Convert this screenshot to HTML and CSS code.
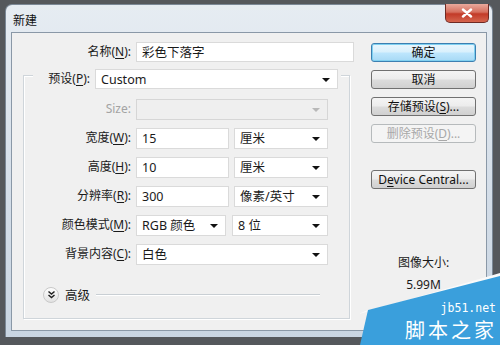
FILE: index.html
```html
<!DOCTYPE html>
<html lang="zh-CN">
<head>
    <meta charset="UTF-8">
    <title>新建</title>
    <link rel="stylesheet" href="styles.css">
</head>
<body>
    <div class="window">
        <div class="titlebar">
            <span class="title">新建</span>
            <button class="close" type="button">
                <svg width="14" height="10" viewBox="0 0 14 10"><path d="M3 1.5 L11 8.5 M11 1.5 L3 8.5" stroke="#fff" stroke-width="2.4" stroke-linecap="round"/></svg>
            </button>
        </div>
        <div class="content">
            <div class="form-col">
                <div class="name-row">
                    <label class="label name-label">名称(<u>N</u>):</label>
                    <div class="field name-field">彩色下落字</div>
                </div>

                <div class="group">
                    <div class="group-head">
                        <label class="label">预设(<u>P</u>):</label>
                        <div class="field select preset">Custom</div>
                    </div>

                    <div class="row first">
                        <label class="label muted">Size:</label>
                        <div class="field select disabled w-full"></div>
                    </div>
                    <div class="row">
                        <label class="label">宽度(<u>W</u>):</label>
                        <div class="field w-num">15</div>
                        <div class="field select w-unit">厘米</div>
                    </div>
                    <div class="row">
                        <label class="label">高度(<u>H</u>):</label>
                        <div class="field w-num">10</div>
                        <div class="field select w-unit">厘米</div>
                    </div>
                    <div class="row">
                        <label class="label">分辨率(<u>R</u>):</label>
                        <div class="field w-num">300</div>
                        <div class="field select w-unit">像素/英寸</div>
                    </div>
                    <div class="row">
                        <label class="label">颜色模式(<u>M</u>):</label>
                        <div class="field select w-mode">RGB 颜色</div>
                        <div class="field select w-bits">8 位</div>
                    </div>
                    <div class="row">
                        <label class="label">背景内容(<u>C</u>):</label>
                        <div class="field select w-full">白色</div>
                    </div>

                    <div class="advanced">
                        <span class="expander">
                            <svg width="9" height="9" viewBox="0 0 9 9"><path d="M1.5 1.5 L4.5 4 L7.5 1.5 M1.5 5 L4.5 7.5 L7.5 5" fill="none" stroke="#222" stroke-width="1.5"/></svg>
                        </span>
                        <span class="adv-text">高级</span>
                        <span class="adv-line"></span>
                    </div>
                </div>
            </div>

            <div class="side-col">
                <button class="btn default" type="button">确定</button>
                <button class="btn" type="button">取消</button>
                <button class="btn" type="button">存储预设(<u>S</u>)...</button>
                <button class="btn" type="button" disabled>删除预设(<u>D</u>)...</button>
                <button class="btn device" type="button">D<u>e</u>vice Central...</button>
                <div class="size-title">图像大小:</div>
                <div class="size-value">5.99M</div>
            </div>
        </div>
    </div>

    <!-- watermark in the corner -->
    <div class="watermark">
        <svg width="140" height="72" viewBox="0 0 140 72">
            <path d="M-4 42 L140 0 L140 6 L8 37 Z" fill="#fafafa"/>
            <path d="M8 37 L140 3 L140 72 L0 72 Z" fill="#3a9fdc"/>
        </svg>
        <span class="wm-url">jb51.net</span>
        <span class="wm-name">脚本之家</span>
    </div>
</body>
</html>
```

FILE: styles.css
```css
* {
    box-sizing: border-box;
}
body {
    margin: 0;
    width: 500px;
    height: 345px;
    overflow: hidden;
    background-color: #55585c;
    font-family: "Noto Sans", "Noto Sans CJK SC", sans-serif;
    font-size: 12px;
    color: #1a1a1a;
    position: relative;
}
u {
    text-decoration-thickness: 1px;
    text-underline-offset: 2px;
}
.window {
    margin: 4px 0 0 5px;
    width: 488px;
    height: 333px;
    border: 1px solid #7b8896;
    border-bottom: none;
    border-radius: 7px 7px 0 0;
    background: linear-gradient(#e6ecf2, #d3dde8 60%, #c9d5e2);
    padding: 0 5px 5px 5px;
}
.titlebar {
    height: 27px;
    display: flex;
    align-items: center;
    padding-top: 3px;
    position: relative;
}
.title {
    padding-left: 2px;
    font-size: 12px;
    color: #111;
}
.close {
    position: absolute;
    right: -2px;
    top: -1px;
    width: 44px;
    height: 19px;
    border: 1px solid #6e2a24;
    border-top: none;
    border-radius: 0 0 5px 5px;
    background: linear-gradient(#e9a99c, #d6705f 45%, #c23a28 55%, #d5654e);
    display: flex;
    align-items: center;
    justify-content: center;
    padding: 0;
}
.content {
    height: 299px;
    background-color: #f0f0f0;
    border: 1px solid #8a98a7;
    display: flex;
}
.form-col {
    width: 342px;
}
.label {
    text-align: right;
    line-height: 20px;
    white-space: nowrap;
}
.muted {
    color: #a3a3a3;
}
.field {
    height: 21px;
    background-color: #fff;
    border: 1px solid #dadada;
    line-height: 19px;
    padding-left: 5px;
    font-size: 12.5px;
    position: relative;
    flex-shrink: 0;
}
.select::after {
    content: "";
    position: absolute;
    right: 7px;
    top: 8px;
    border-left: 4px solid transparent;
    border-right: 4px solid transparent;
    border-top: 4px solid #111;
}
.select.disabled {
    background-color: #efefef;
    border-color: #d6d6d6;
}
.select.disabled::after {
    border-top-color: #b8b8b8;
}
.name-row {
    display: flex;
    gap: 5px;
    margin-top: 9px;
}
.name-label {
    width: 119px;
}
.name-field {
    width: 218px;
    height: 20px;
}
.group {
    margin: 13px 0 0 11px;
    width: 327px;
    height: 244px;
    border: 1px solid #cfd5da;
    box-shadow: inset 1px 1px #fff, 1px 1px #fff;
}
.group-head {
    display: flex;
    gap: 5px;
    margin: -7px 0 0 9px;
    padding: 0 3px 0 12px;
    width: fit-content;
    background-color: #f0f0f0;
}
.group-head .label {
    width: 45px;
}
.preset {
    width: 243px;
    height: 20px;
}
.row {
    display: flex;
    gap: 5px;
    margin-top: 8px;
}
.row.first {
    margin-top: 10px;
}
.row .label {
    width: 107px;
}
.w-full {
    width: 192px;
}
.w-num {
    width: 93px;
}
.w-unit {
    width: 94px;
}
.w-mode {
    width: 90px;
}
.w-bits {
    width: 96px;
    margin-left: 1px;
}
.advanced {
    display: flex;
    align-items: center;
    margin: 20px 29px 0 19px;
}
.expander {
    width: 16px;
    height: 16px;
    border-radius: 50%;
    border: 1px solid #c9c9c9;
    background: linear-gradient(#fdfdfd, #e2e2e2);
    display: flex;
    align-items: center;
    justify-content: center;
}
.adv-text {
    margin-left: 6px;
    font-size: 12.5px;
}
.adv-line {
    flex: 1;
    margin-left: 6px;
    height: 2px;
    border-top: 1px solid #c9cfd4;
    border-bottom: 1px solid #fff;
}
.side-col {
    margin-left: 17px;
    width: 105px;
    display: flex;
    flex-direction: column;
    gap: 8px;
    padding-top: 10px;
}
.btn {
    height: 19px;
    padding: 0;
    border: 1px solid #707070;
    border-radius: 3px;
    background: linear-gradient(#f4f4f4, #ececec 48%, #dcdcdc 52%, #d0d0d0);
    font-family: "Noto Sans", "Noto Sans CJK SC", sans-serif;
    font-size: 12px;
    line-height: 16px;
    color: #111;
}
.btn.default {
    border-color: #3c7fb1;
    background: linear-gradient(#eaf6fd, #d9f0fc 48%, #bee6fd 52%, #a7d9f5);
    box-shadow: inset 0 0 0 1px #7fd0f0;
}
.btn:disabled {
    border-color: #b6babc;
    background: #f4f4f4;
    color: #a8a8a8;
}
.btn.device {
    margin-top: 19px;
}
.size-title {
    margin-top: 58px;
    text-align: center;
    line-height: 16px;
}
.size-value {
    text-align: center;
    line-height: 16px;
    margin-top: -2px;
}
.watermark {
    position: absolute;
    left: 360px;
    top: 273px;
    width: 140px;
    height: 72px;
}
.watermark svg {
    position: absolute;
    left: 0;
    top: 0;
}
.wm-url {
    position: absolute;
    right: 4px;
    top: 29px;
    font-family: "DejaVu Sans Mono", monospace;
    font-size: 11.5px;
    line-height: 12px;
    color: #fff;
}
.wm-name {
    position: absolute;
    right: 3px;
    top: 45px;
    font-family: "Noto Sans CJK SC", sans-serif;
    font-size: 20px;
    line-height: 24px;
    letter-spacing: 3px;
    color: #fff;
}
```
